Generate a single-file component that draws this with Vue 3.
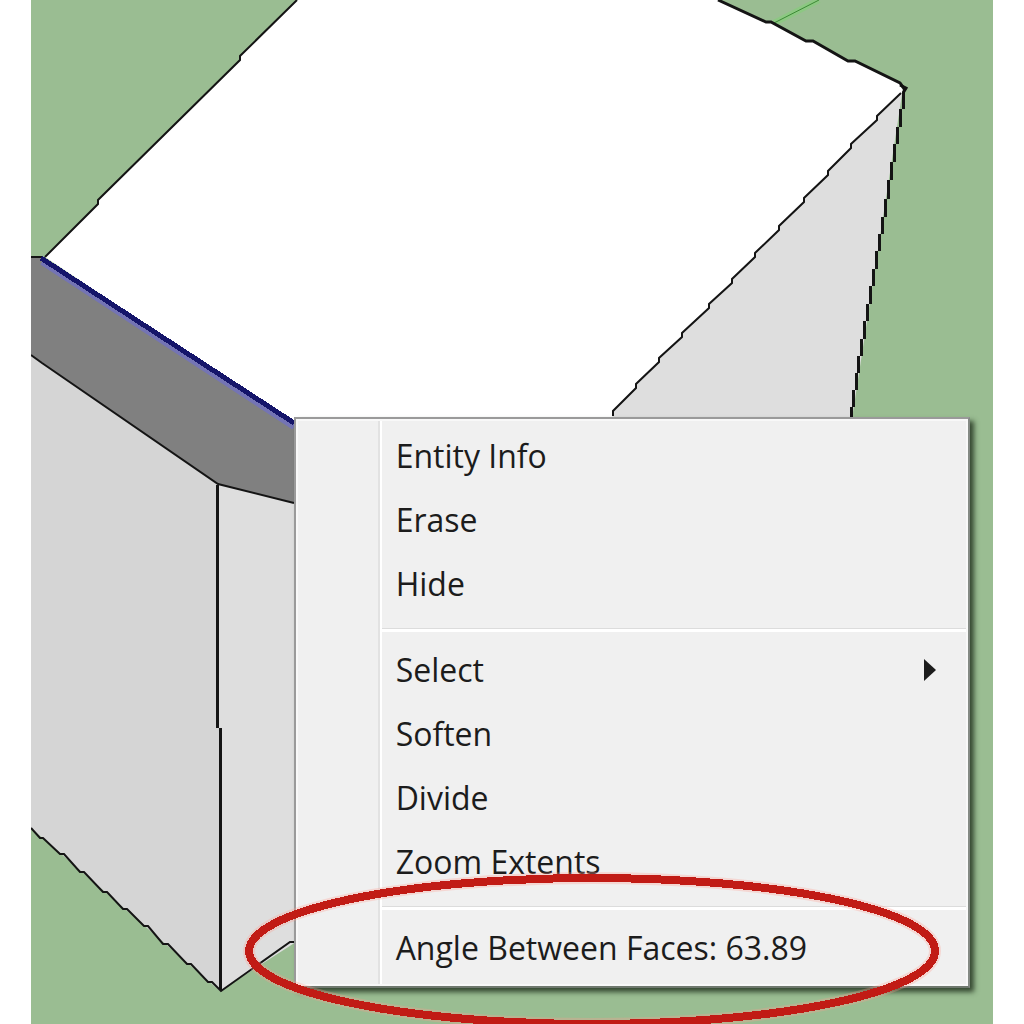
<script setup>
const groups = [
  [{ label: 'Entity Info' }, { label: 'Erase' }, { label: 'Hide' }],
  [
    { label: 'Select', submenu: true },
    { label: 'Soften' },
    { label: 'Divide' },
    { label: 'Zoom Extents' },
  ],
  [{ label: 'Angle Between Faces: 63.89' }],
]
</script>

<template>
  <main class="scene">
    <svg class="layer" viewBox="31 0 962 1024" aria-hidden="true">
      <!-- faces of the solid -->
      <path class="face-right" d="M903 88L851 425H600V380Z" />
      <path
        class="face-top"
        d="M297 0L240 56V60L98 200V204L45 257L296 425H600L613 416V411L636 388V384L659 362V358L682 337V333L709 308V304L732 283V279L755 257V253L779 230V226L804 202V198L828 175V171L851 148V144L877 120V116L903 92L900 83L855 62H848L813 41H806L771 21H766L718 0Z"
      />
      <path class="face-bevel" d="M31 257H42L296 425V504L218 485L31 356Z" />
      <path class="face-left" d="M31 355L218 484L220 991L31 828Z" />
      <path class="face-front" d="M218 484L296 503V942L220 991Z" />

      <!-- green axis -->
      <path class="axis-glow" d="M774 23L819 0" />
      <path class="axis" d="M774 23L819 0" />

      <!-- edges -->
      <path class="edge" d="M297 0L240 56V60L98 200V204L45 257" />
      <path class="edge strong" d="M718 0L766 22H771L806 41H813L848 61H855L900 83L905 90" />
      <path
        class="edge"
        d="M901 93L877 116V120L851 144V148L828 171V175L804 198V202L779 226V230L755 253V257L732 279V283L709 304V308L682 333V337L659 358V362L636 384V388L613 411V416"
      />
      <path
        class="edge stepped"
        d="M903 92V109M900 109V127M897 127V144M894 144V162M891 162V180M888 180V199M885 199V217M882 217V234M879 234V251M876 251V269M873 269V286M870 286V304M867 304V321M864 321V339M861 339V356M858 356V373M856 373V390M853 390V407M851 407V417"
      />
      <path class="edge" d="M31 257H42" />
      <path class="edge" d="M31 355L42 363L218 484L294 503" />
      <path class="edge stepped" d="M217 485V728M220 728V990" />
      <path
        class="edge"
        d="M31 828L40 838H43L60 854H64L80 872H84L103 892H107L123 909H127L144 926H148L163 944H168L187 964H191L208 982H212L221 991L290 942H294"
      />
      <path class="node" d="M900 85L906 88L903 93" />

      <!-- selected edge -->
      <path class="selected-glow" d="M42 262L294 427" />
      <path class="selected" d="M41 258L294 423" />
    </svg>

    <ul class="menu" role="menu">
      <li v-for="(group, g) in groups" :key="g" class="group" role="none">
        <ul class="items" role="group">
          <li v-for="item in group" :key="item.label" role="none">
            <button class="item" type="button" role="menuitem" :aria-haspopup="item.submenu ? 'menu' : undefined">
              <span>{{ item.label }}</span>
              <svg v-if="item.submenu" class="arrow" viewBox="0 0 12 22" aria-hidden="true">
                <path d="M0 0L12 11L0 22Z" />
              </svg>
            </button>
          </li>
        </ul>
      </li>
    </ul>

    <svg class="layer marker" viewBox="31 0 962 1024" aria-hidden="true">
      <ellipse class="ring-glow" cx="592" cy="951" rx="343" ry="73" />
      <ellipse class="ring" cx="592" cy="951" rx="343" ry="73" />
    </svg>
  </main>
</template>

<style>
body {
  margin: 0;
  background: #fff;
}
</style>

<style scoped>
.scene {
  position: relative;
  margin: 0 31px;
  aspect-ratio: 962 / 1024;
  overflow: hidden;
  background: #9abd92;
}

.layer {
  position: absolute;
  inset: 0;
  display: block;
  width: 100%;
  height: 100%;
}

.marker {
  pointer-events: none;
}

.face-top {
  fill: #fff;
}

.face-right,
.face-front {
  fill: #dedede;
}

.face-bevel {
  fill: #808080;
}

.face-left {
  fill: #d5d5d5;
}

.edge,
.node,
.axis,
.axis-glow,
.selected,
.selected-glow,
.ring,
.ring-glow {
  fill: none;
}

.edge {
  stroke: #141414;
  stroke-width: 2;
}

.strong,
.stepped {
  stroke-width: 3;
}

.stepped,
.selected,
.ring {
  shape-rendering: crispEdges;
}

.node {
  stroke: #111;
  stroke-width: 3;
}

.axis-glow {
  stroke: #8cc882;
  stroke-width: 6;
}

.axis {
  stroke: #3c8a35;
  stroke-width: 1;
}

.selected-glow {
  stroke: #7474b4;
  stroke-width: 6;
}

.selected {
  stroke: #15156a;
  stroke-width: 5;
}

.ring-glow {
  stroke: #ff9c90;
  stroke-opacity: 0.3;
  stroke-width: 12;
}

.ring {
  stroke: #c11b15;
  stroke-width: 8;
}

.menu {
  position: absolute;
  top: 40.7%;
  left: 27.3%;
  right: 2.4%;
  margin: 0;
  padding: 5px 0 6px;
  list-style: none;
  border: 2px solid #9a9a9a;
  border-right-color: #848a84;
  border-bottom-color: #6f786e;
  background:
    linear-gradient(#e2e2e2, #e2e2e2) 82px 0 / 2px 100% no-repeat,
    linear-gradient(#fff, #fff) 84px 0 / 2px 100% no-repeat,
    #f0f0f0;
  box-shadow:
    inset 0 0 0 2px #f8f8f8,
    4px 4px 5px rgba(20, 35, 18, 0.75);
  color: #1c1c1c;
  font-family: "Open Sans", "Noto Sans", sans-serif;
  font-size: 32px;
  line-height: 64px;
}

.items {
  margin: 0;
  padding: 0;
  list-style: none;
}

.group + .group::before {
  content: "";
  display: block;
  height: 3px;
  margin: 12px 2px 6px 86px;
  border-top: 1px solid #dcdcdc;
  background: #fff;
}

.item {
  display: flex;
  align-items: center;
  justify-content: space-between;
  width: 100%;
  height: 64px;
  padding: 0 32px 0 100px;
  border: 0;
  background: none;
  color: inherit;
  font: inherit;
  text-align: left;
  white-space: nowrap;
}

.arrow {
  width: 12px;
  height: 22px;
  fill: #1c1c1c;
}
</style>
